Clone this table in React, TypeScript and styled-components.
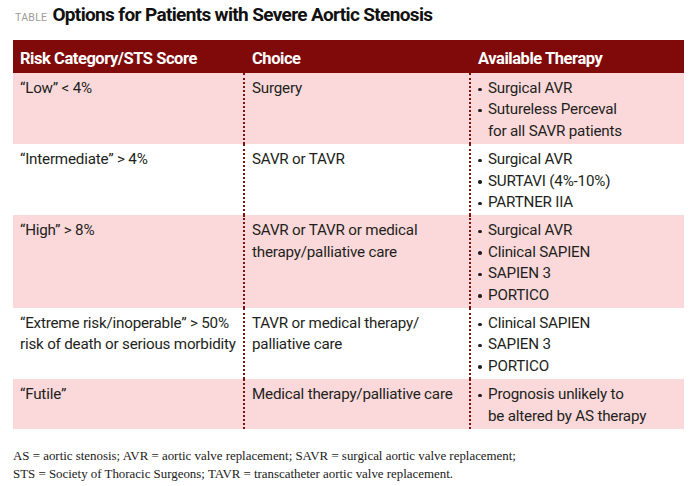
import React from "react";
import styled, { createGlobalStyle } from "styled-components";

type Row = {
    risk: string[];
    choice: string[];
    therapy: string[][];
};

const rows: Row[] = [
    {
        risk: ["\u201CLow\u201D < 4%"],
        choice: ["Surgery"],
        therapy: [["Surgical AVR"], ["Sutureless Perceval", "for all SAVR patients"]],
    },
    {
        risk: ["\u201CIntermediate\u201D > 4%"],
        choice: ["SAVR or TAVR"],
        therapy: [["Surgical AVR"], ["SURTAVI (4%-10%)"], ["PARTNER IIA"]],
    },
    {
        risk: ["\u201CHigh\u201D > 8%"],
        choice: ["SAVR or TAVR or medical", "therapy/palliative care"],
        therapy: [["Surgical AVR"], ["Clinical SAPIEN"], ["SAPIEN 3"], ["PORTICO"]],
    },
    {
        risk: ["\u201CExtreme risk/inoperable\u201D > 50%", "risk of death or serious morbidity"],
        choice: ["TAVR or medical therapy/", "palliative care"],
        therapy: [["Clinical SAPIEN"], ["SAPIEN 3"], ["PORTICO"]],
    },
    {
        risk: ["\u201CFutile\u201D"],
        choice: ["Medical therapy/palliative care"],
        therapy: [["Prognosis unlikely to", "be altered by AS therapy"]],
    },
];

const Lines = ({ lines }: { lines: string[] }) => (
    <>
        {lines.map((l, i) => (
            <Line key={i}>{l}</Line>
        ))}
    </>
);

const App = () => {
    return (
        <Page>
            <GlobalStyle />
            <Title>
                <Label>TABLE</Label>
                <Heading>Options for Patients with Severe Aortic Stenosis</Heading>
            </Title>
            <Table>
                <HeadRow>
                    <HeadCell>Risk Category/STS Score</HeadCell>
                    <HeadCell>Choice</HeadCell>
                    <HeadCell>Available Therapy</HeadCell>
                </HeadRow>
                {rows.map((row, i) => (
                    <BodyRow key={i} $shaded={i % 2 === 0}>
                        <Cell>
                            <Lines lines={row.risk} />
                        </Cell>
                        <Cell $divider>
                            <Lines lines={row.choice} />
                        </Cell>
                        <Cell $divider>
                            <Bullets>
                                {row.therapy.map((item, j) => (
                                    <Bullet key={j}>
                                        <Lines lines={item} />
                                    </Bullet>
                                ))}
                            </Bullets>
                        </Cell>
                    </BodyRow>
                ))}
            </Table>
            <Notes>
                <Line>AS = aortic stenosis; AVR = aortic valve replacement; SAVR = surgical aortic valve replacement;</Line>
                <Line>STS = Society of Thoracic Surgeons; TAVR = transcatheter aortic valve replacement.</Line>
            </Notes>
        </Page>
    );
};

export default App;

const GlobalStyle = createGlobalStyle`
    body {
        margin: 0;
        background: #ffffff;
    }
`;

const Page = styled.div`
    width: 699px;
    height: 486px;
    padding: 4px 15px 0 13px;
    box-sizing: border-box;
    font-family: Roboto, "Liberation Sans", sans-serif;
    color: #231f20;
`;

const Title = styled.div`
    display: flex;
    align-items: baseline;
    gap: 5px;
    padding-left: 2px;
    height: 36px;
    line-height: 22px;
`;

const Label = styled.span`
    font-size: 10.5px;
    color: #a09a9a;
    letter-spacing: 0.3px;
`;

const Heading = styled.span`
    font-size: 19px;
    font-weight: 700;
    letter-spacing: -0.65px;
    color: #111;
`;

const Table = styled.div`
    width: 671px;
    display: flex;
    flex-direction: column;
`;

const columns = "232px 226px 213px";

const HeadRow = styled.div`
    display: grid;
    grid-template-columns: ${columns};
    height: 33px;
    background: #800a0a;
    align-items: end;
`;

const HeadCell = styled.div`
    color: #fff;
    font-size: 16.5px;
    font-weight: 700;
    letter-spacing: -0.45px;
    padding: 0 0 4px 7px;
    line-height: 20px;
`;

const BodyRow = styled.div<{ $shaded: boolean }>`
    display: grid;
    grid-template-columns: ${columns};
    background: ${(p) => (p.$shaded ? "#fbd9db" : "#ffffff")};
`;

const Cell = styled.div<{ $divider?: boolean }>`
    padding: 5px 0 2px 7px;
    font-size: 15.2px;
    line-height: 21.4px;
    letter-spacing: -0.2px;
    border-left: ${(p) => (p.$divider ? "2px dotted #7f1010" : "none")};
    margin-left: ${(p) => (p.$divider ? "-2px" : "0")};
`;

const Line = styled.div`
    white-space: nowrap;
`;

const Bullets = styled.ul`
    list-style: none;
    margin: 0;
    padding: 0;
`;

const Bullet = styled.li`
    position: relative;
    padding-left: 10px;

    &::before {
        content: "";
        position: absolute;
        left: 0;
        top: 9.5px;
        width: 3.5px;
        height: 3.5px;
        border-radius: 50%;
        background: #231f20;
    }
`;

const Notes = styled.div`
    margin-top: 18px;
    font-family: "Liberation Serif", "Times New Roman", serif;
    font-size: 12.9px;
    line-height: 18px;
    color: #1a1a1a;
`;
